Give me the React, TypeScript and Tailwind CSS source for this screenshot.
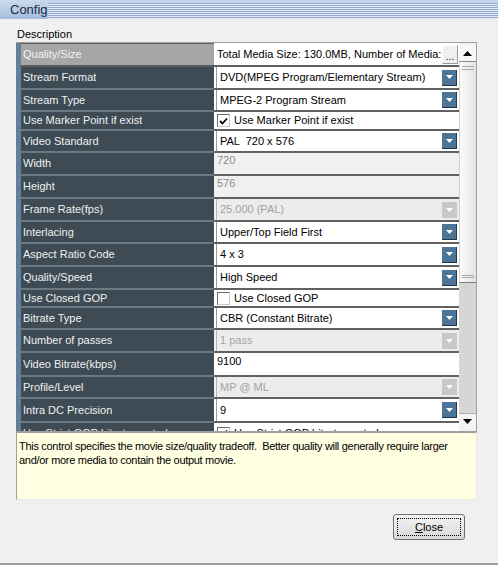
import React from "react";

type Kind = "dots" | "combo" | "disabled" | "check" | "readonly" | "edit";

type Row = {
  label: string;
  h: string;
  kind: Kind;
  value: string;
  checked?: boolean;
};

const rows: Row[] = [
  { label: "Quality/Size", h: "h-[24px]", kind: "dots", value: "Total Media Size: 130.0MB, Number of Media: 1" },
  { label: "Stream Format", h: "h-[23px]", kind: "combo", value: "DVD(MPEG Program/Elementary Stream)" },
  { label: "Stream Type", h: "h-[22px]", kind: "combo", value: "MPEG-2 Program Stream" },
  { label: "Use Marker Point if exist", h: "h-[19px]", kind: "check", value: "Use Marker Point if exist", checked: true },
  { label: "Video Standard", h: "h-[22px]", kind: "combo", value: "PAL  720 x 576" },
  { label: "Width", h: "h-[23px]", kind: "readonly", value: "720" },
  { label: "Height", h: "h-[23px]", kind: "readonly", value: "576" },
  { label: "Frame Rate(fps)", h: "h-[23px]", kind: "disabled", value: "25.000 (PAL)" },
  { label: "Interlacing", h: "h-[22px]", kind: "combo", value: "Upper/Top Field First" },
  { label: "Aspect Ratio Code", h: "h-[23px]", kind: "combo", value: "4 x 3" },
  { label: "Quality/Speed", h: "h-[23px]", kind: "combo", value: "High Speed" },
  { label: "Use Closed GOP", h: "h-[18px]", kind: "check", value: "Use Closed GOP", checked: false },
  { label: "Bitrate Type", h: "h-[22px]", kind: "combo", value: "CBR (Constant Bitrate)" },
  { label: "Number of passes", h: "h-[23px]", kind: "disabled", value: "1 pass" },
  { label: "Video Bitrate(kbps)", h: "h-[24px]", kind: "edit", value: "9100" },
  { label: "Profile/Level", h: "h-[22px]", kind: "disabled", value: "MP @ ML" },
  { label: "Intra DC Precision", h: "h-[24px]", kind: "combo", value: "9" },
  { label: "Use Strict GOP bitrate control", h: "h-[22px]", kind: "check", value: "Use Strict GOP bitrate control", checked: true },
];

function DropButton({ disabled = false }: { disabled?: boolean }) {
  return (
    <div
      className={
        disabled
          ? "mr-[2px] flex h-[16px] w-[15px] flex-none items-center justify-center bg-[#c8c8c8]"
          : "mr-[2px] flex h-[16px] w-[15px] flex-none items-center justify-center border-b border-r border-[#22364a] bg-[#4d7497]"
      }
    >
      <svg width="7" height="4" viewBox="0 0 7 4" aria-hidden="true">
        <path d="M0 0h7L3.5 4z" fill="#ffffff" />
      </svg>
    </div>
  );
}

function Checkbox({ checked }: { checked?: boolean }) {
  return (
    <div className="flex h-[13px] w-[13px] flex-none items-center justify-center border border-[#c8c8c8] border-t-[#6b6b6b] border-l-[#6b6b6b] bg-white">
      {checked && (
        <svg width="9" height="8" viewBox="0 0 9 8" aria-hidden="true">
          <path d="M1 4l2.5 2.5L8 1.5" fill="none" stroke="#000" strokeWidth="1.8" />
        </svg>
      )}
    </div>
  );
}

function Value({ row }: { row: Row }) {
  if (row.kind === "dots") {
    return (
      <div className="flex h-full min-w-0 flex-1 items-center">
        <span className="min-w-0 flex-1 overflow-hidden whitespace-nowrap pl-[3px] text-black">{row.value}</span>
        <div className="mr-[1px] flex h-[19px] w-[16px] flex-none items-end justify-center border border-[#9a9a9a] border-t-white border-l-white bg-[#f0f0f0] pb-[1px] text-[10px] leading-[10px] text-black">
          ...
        </div>
      </div>
    );
  }
  if (row.kind === "combo" || row.kind === "disabled") {
    const off = row.kind === "disabled";
    return (
      <div
        className={
          off
            ? "ml-[2px] flex h-full min-w-0 flex-1 items-center border-l border-[#b4b4b4] bg-[#ececec] pl-[3px]"
            : "ml-[2px] flex h-full min-w-0 flex-1 items-center border-l border-[#9a9a9a] bg-white pl-[3px]"
        }
      >
        <span className={off ? "min-w-0 flex-1 whitespace-pre text-[#a3a3a3]" : "min-w-0 flex-1 whitespace-pre text-black"}>
          {row.value}
        </span>
        <DropButton disabled={off} />
      </div>
    );
  }
  if (row.kind === "check") {
    return (
      <div className="flex h-full items-center pl-[3px] text-black">
        <Checkbox checked={row.checked} />
        <span className="ml-[4px] whitespace-nowrap">{row.value}</span>
      </div>
    );
  }
  return (
    <div className={row.kind === "readonly" ? "pl-[3px] pt-[1px] leading-[13px] text-[#8c8c8c]" : "pl-[3px] pt-[2px] leading-[13px] text-black"}>
      {row.value}
    </div>
  );
}

function Scrollbar() {
  return (
    <div className="flex w-[17px] flex-none flex-col bg-[#f0f0f0]">
      <div className="mt-[2px] flex h-[17px] flex-none items-center justify-center border-b border-[#8a8a8a] bg-[#f6f6f6]">
        <svg width="9" height="5" viewBox="0 0 9 5" aria-hidden="true">
          <path d="M0 5h9L4.5 0z" fill="#000" />
        </svg>
      </div>
      <div className="flex h-[221px] flex-none flex-col justify-between border-b border-l border-[#7a7a7a] border-l-[#d0d0d0] bg-gradient-to-r from-[#fbfbfb] to-[#e4e4e4] px-[2px] py-[4px]">
        <div className="flex flex-col gap-[2px]">
          <div className="h-px bg-[#a8a8a8]" />
          <div className="h-px bg-[#a8a8a8]" />
        </div>
        <div className="flex flex-col gap-[1px]">
          <div className="h-px bg-[#a8a8a8]" />
          <div className="h-px bg-[#a8a8a8]" />
        </div>
      </div>
      <div className="flex-1 bg-[#d6d6d6]" />
      <div className="mb-[2px] flex h-[16px] flex-none items-center justify-center border-t border-[#b0b0b0] bg-[#f4f4f4]">
        <svg width="9" height="5" viewBox="0 0 9 5" aria-hidden="true">
          <path d="M0 0h9L4.5 5z" fill="#000" />
        </svg>
      </div>
    </div>
  );
}

export default function App() {
  return (
    <div className="flex h-[565px] w-[498px] flex-col overflow-hidden bg-[#f0f0f0] font-['Liberation_Sans',Arial,sans-serif] text-[11px] leading-[13px]">
      {/* title bar */}
      <div className="flex h-[19px] flex-none">
        <div className="flex w-[48px] flex-none items-center bg-gradient-to-b from-[#cbdaed] to-[#a5bedc] pl-[10px] text-[13px] text-[#1b2a48]">
          Config
        </div>
        <div className="flex flex-1 flex-col bg-[#c6d6ea] pt-[3px]">
          <div className="flex-1 bg-[repeating-linear-gradient(to_bottom,#8eabd0_0px,#8eabd0_1px,#e2eaf5_1px,#e2eaf5_2px)]" />
        </div>
      </div>

      <div className="h-[23px] flex-none pl-[17px] pt-[9px] text-black">Description</div>

      {/* property grid */}
      <div className="ml-[16px] mr-[21px] flex h-[390px] flex-none overflow-hidden border-b border-r border-t border-[#a0a0a0] bg-white">
        <div className="w-[5px] flex-none bg-[#62809a]" />
        <div className="min-w-0 flex-1 overflow-hidden">
          {rows.map((row, i) => {
            const selected = i === 0;
            const bg =
              row.kind === "readonly" || row.kind === "disabled" ? "bg-[#f0f0f0]" : "bg-white";
            return (
              <div key={row.label} className={`flex flex-none ${row.h}`}>
                <div
                  className={
                    selected
                      ? "flex w-[193px] flex-none items-center border-b-2 border-t border-[#5c5c5c] bg-[#a6a6a6] pl-[2px] text-[#f4f4f4]"
                      : "flex w-[193px] flex-none items-center border-b-2 border-[#6b7983] bg-[#3e4b54] pl-[2px] text-[#eef0f1]"
                  }
                >
                  <span className="truncate">{row.label}</span>
                </div>
                <div className={`flex min-w-0 flex-1 border-b-2 border-[#616161] ${bg}`}>
                  <Value row={row} />
                </div>
              </div>
            );
          })}
        </div>
        <Scrollbar />
      </div>

      {/* description */}
      <div className="ml-[16px] mr-[21px] h-[68px] flex-none border border-[#a0a0a0] border-r-[#e8e8e8] border-b-[#e8e8e8] bg-[#ffffe1] pl-[2px] pt-[6px] leading-[14px] tracking-[-0.3px] whitespace-pre text-black">
        {"This control specifies the movie size/quality tradeoff.  Better quality will generally require larger\nand/or more media to contain the output movie."}
      </div>

      <div className="flex flex-none justify-end pr-[33px] pt-[14px]">
        <button
          type="button"
          className="h-[26px] w-[72px] rounded-[3px] border border-[#707070] bg-gradient-to-b from-[#f4f4f4] to-[#d8d8d8] p-[3px] text-black"
        >
          <span className="flex h-full w-full items-center justify-center border border-dotted border-black">
            <span>
              <span className="underline">C</span>lose
            </span>
          </span>
        </button>
      </div>

      <div className="flex-1" />
      <div className="h-[2px] flex-none bg-[#a0a0a0]" />
    </div>
  );
}
